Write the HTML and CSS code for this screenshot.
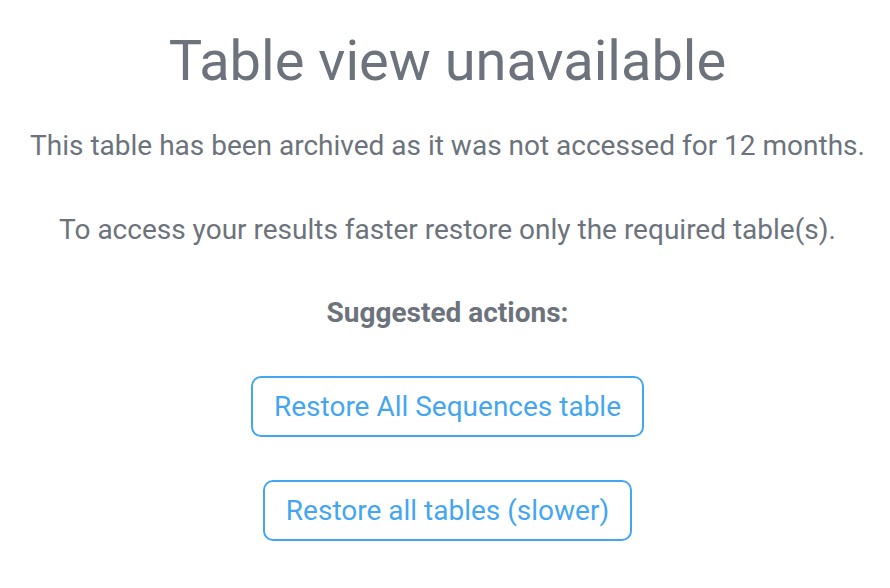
FILE: index.html
```html
<!DOCTYPE html>
<html lang="en">
<head>
    <meta charset="UTF-8">
    <meta name="viewport" content="width=device-width, initial-scale=1.0">
    <title>Table view unavailable</title>
    <link rel="stylesheet" href="styles.css">
</head>
<body>
    <div class="archived">
        <h1 class="archived-title">Table view unavailable</h1>
        <p class="archived-text">This table has been archived as it was not accessed for 12 months.</p>
        <p class="archived-text">To access your results faster restore only the required table(s).</p>
        <p class="archived-label">Suggested actions:</p>
        <div class="actions">
            <button class="btn-outline">Restore All Sequences table</button>
            <button class="btn-outline">Restore all tables (slower)</button>
        </div>
    </div>
</body>
</html>
```

FILE: styles.css
```css
* {
    margin: 0;
    padding: 0;
    box-sizing: border-box;
}

body {
    font-family: Roboto, "Liberation Sans", sans-serif;
    background: #fff;
    color: #6c737c;
}

.archived {
    display: flex;
    flex-direction: column;
    align-items: center;
    text-align: center;
    padding: 28px 0 0 5px;
}

.archived-title {
    font-size: 56px;
    font-weight: 400;
    line-height: 66px;
    margin-bottom: 35px;
}

.archived-text {
    font-size: 28px;
    line-height: 33px;
    margin-bottom: 51px;
}

.archived-label {
    font-size: 28px;
    font-weight: 700;
    line-height: 33px;
    margin-top: -1px;
    margin-bottom: 47px;
}

.actions {
    display: flex;
    flex-direction: column;
    align-items: center;
    gap: 43px;
}

.btn-outline {
    font-family: inherit;
    font-size: 28px;
    line-height: 33px;
    color: #45a6f0;
    background: #fff;
    border: 2px solid #45a6f0;
    border-radius: 10px;
    height: 61px;
    padding: 0 21px;
    cursor: pointer;
}
```
